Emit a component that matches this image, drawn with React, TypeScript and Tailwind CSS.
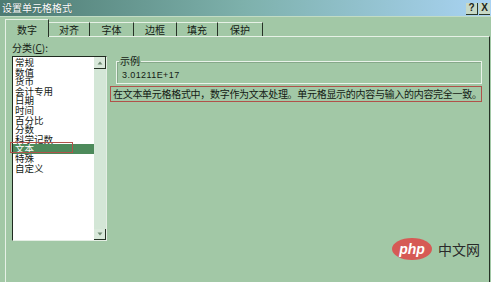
export default function App() {
  const items = ["常规", "数值", "货币", "会计专用", "日期", "时间", "百分比", "分数", "科学记数", "文本", "特殊", "自定义"];
  const tabs = [
    { label: "数字", w: "w-[44px]", active: true },
    { label: "对齐", w: "w-[41px]" },
    { label: "字体", w: "w-[44px]" },
    { label: "边框", w: "w-[43px]" },
    { label: "填充", w: "w-[41px]" },
    { label: "保护", w: "w-[45px]" },
  ];
  return (
    <div className="relative w-[491px] h-[282px] overflow-hidden bg-[#a2c8a6] font-['Noto_Sans_CJK_SC',sans-serif] text-[#141a14]">
      {/* title bar */}
      <div className="flex h-[16px] items-center justify-between bg-gradient-to-r from-[#4d7b72] via-[#7eb1ac] to-[#a9d3f3] pl-[2px] pr-[1px]">
        <span className="text-[10px] leading-[10px] text-white [text-shadow:0_0_1px_#2c4a44]">设置单元格格式</span>
        <div className="flex gap-[1px] pt-[1px]">
          <div className="flex h-[12px] w-[12px] items-center justify-center border-r border-b border-[#2a382a] bg-[#c7d9c6] font-['Liberation_Sans',sans-serif] text-[10px] font-bold leading-none text-[#1b241b]">?</div>
          <div className="flex h-[12px] w-[11px] items-center justify-center border-b border-[#2a382a] bg-[#c7d9c6] font-['Liberation_Sans',sans-serif] text-[10px] font-bold leading-none text-[#1b241b]">X</div>
        </div>
      </div>
      <div className="h-[1px] bg-[#c2dcc5]" />

      {/* tabs */}
      <div className="flex h-[19px] items-end pl-[5px]">
        {tabs.map((t) =>
          t.active ? (
            <div
              key={t.label}
              className={`relative z-10 -mb-[1px] flex h-[18px] ${t.w} items-center justify-center border-t border-l border-r border-t-[#e6f1e6] border-l-[#e6f1e6] border-r-[#273327] bg-[#a2c8a6] pt-[2px] text-[10px] leading-[10px]`}
            >
              {t.label}
            </div>
          ) : (
            <div
              key={t.label}
              className={`flex h-[14px] ${t.w} items-center justify-center border-t border-r border-t-[#e6f1e6] border-r-[#273327] pt-[1px] text-[10px] leading-[10px]`}
            >
              {t.label}
            </div>
          )
        )}
      </div>

      {/* panel */}
      <div className="ml-[5px] flex h-[260px] w-[485px] border-t border-l border-r border-t-[#e6f1e6] border-l-[#e6f1e6] border-r-[#263226]">
        {/* left column */}
        <div className="relative flex flex-col pl-[6px] pt-[5px]">
          <div className="text-[10px] leading-[12px]">
            分类(<span className="underline">C</span>):
          </div>
          <div className="mt-[2px] flex h-[185px] w-[95px] border-t border-l border-b border-r border-t-[#1f2a1f] border-l-[#1f2a1f] border-b-[#e4eee4] border-r-[#e4eee4]">
            <div className="flex flex-1 flex-col bg-white pt-[1px]">
              {items.map((it) =>
                it === "文本" ? (
                  <div key={it} className="h-[9.6px] bg-[#4d8a5b] pl-[2px] text-[9.5px] leading-[9.6px] text-white">
                    {it}
                  </div>
                ) : (
                  <div key={it} className="h-[9.6px] pl-[2px] text-[9.5px] leading-[9.6px]">
                    {it}
                  </div>
                )
              )}
            </div>
            <div className="flex w-[12px] flex-col justify-between bg-[#d3e6d6]">
              <div className="flex h-[12px] items-center justify-center border-r border-b border-[#263326] bg-[#d9e9db]">
                <svg width="6" height="4" viewBox="0 0 6 4"><path d="M3 0.5 L5.5 3.5 L0.5 3.5 Z" fill="#6f8a72" /></svg>
              </div>
              <div className="flex h-[11px] items-center justify-center border-r border-b border-[#263326] bg-[#d9e9db]">
                <svg width="6" height="4" viewBox="0 0 6 4"><path d="M0.5 0.5 L5.5 0.5 L3 3.5 Z" fill="#6f8a72" /></svg>
              </div>
            </div>
          </div>
          {/* red annotation box */}
          <div className="absolute left-[4px] top-[105px] h-[11px] w-[63px] border border-[#b0524a]" />
        </div>

        {/* right column */}
        <div className="ml-[3px] flex flex-col pt-[19px]">
          <fieldset className="ml-[6px] h-[28px] w-[366px] border border-[#eaf3ea] px-0 shadow-[inset_1px_1px_0_#86a889]">
            <legend className="ml-[2px] px-[1px] text-[10px] leading-[10px]">示例</legend>
            <div className="pl-[5px] pt-[4px] font-['Liberation_Sans',sans-serif] text-[9px] leading-[10px] tracking-[0.4px]">3.01211E+17</div>
          </fieldset>
          <div className="mt-[2px] flex h-[16px] w-[372px] items-center border border-[#b0524a] pl-[2px] text-[10px] leading-[12px] tracking-[-0.3px] whitespace-nowrap">
            在文本单元格格式中，数字作为文本处理。单元格显示的内容与输入的内容完全一致。
          </div>
        </div>
      </div>

      {/* watermark logo */}
      <div className="absolute left-[392px] top-[238px] flex items-center gap-[6px]">
        <div className="flex h-[22px] w-[40px] items-center justify-center rounded-[50%] bg-[#d65a55] font-['Liberation_Sans',sans-serif] text-[14px] font-bold italic leading-none text-white">
          php
        </div>
        <span className="text-[14px] leading-[14px] text-[#2a2a2a]">中文网</span>
      </div>
    </div>
  );
}
